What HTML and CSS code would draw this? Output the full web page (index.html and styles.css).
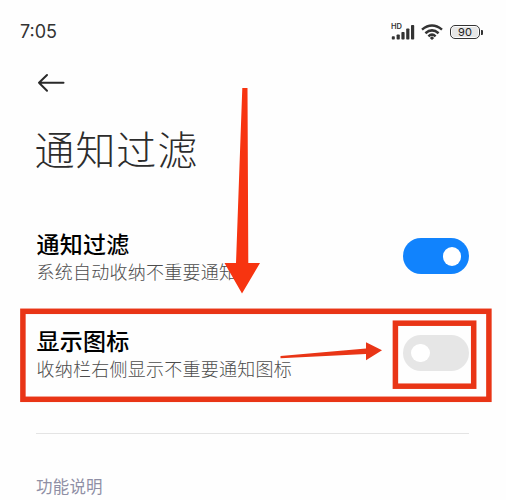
FILE: index.html
```html
<!DOCTYPE html>
<html lang="zh-CN">
<head>
<meta charset="utf-8">
<title>通知过滤</title>
<link rel="stylesheet" href="styles.css">
</head>
<body>
<div class="screen">
  <header class="status">
    <span class="time">7:05</span>
    <div class="indicators">
      <div class="signal">
        <span class="hd">HD</span>
        <svg width="24" height="16" viewBox="0 0 24 16" fill="#333"><rect x=".8" y="12.3" width="3" height="3.2" rx=".8"/><rect x="5.6" y="10.5" width="3.2" height="5" rx=".8"/><rect x="10.4" y="8" width="3.2" height="7.5" rx=".8"/><rect x="15.2" y="4.5" width="3.2" height="11" rx=".8"/><rect x="20" y="1" width="3.2" height="14.5" rx=".8"/></svg>
      </div>
      <svg class="wifi" width="22" height="16" viewBox="0 0 22 16" fill="none" stroke="#333" stroke-width="2.5"><path d="M1 5.6Q11-2.6 21 5.6M4.4 9.2Q11 3.5 17.6 9.2M7.4 12.3Q11 9 14.6 12.3"/><path d="M11 12.2l2.2 1.8-2.2 2-2.2-2z" fill="#333" stroke="none"/></svg>
      <div class="battery"><span class="level">90</span></div><i class="cap"></i>
    </div>
  </header>
  <nav class="nav">
    <svg width="28" height="20" viewBox="0 0 28 20" fill="none" stroke="#292929" stroke-width="2" stroke-linecap="round" stroke-linejoin="round"><path d="M26.5 9.7H2M10 2L2 9.7l8 8"/></svg>
  </nav>
  <h1 class="title">通知过滤</h1>
  <main>
    <section class="row">
      <div><h2 class="name">通知过滤</h2><p class="desc">系统自动收纳不重要通知</p></div>
      <div class="toggle on"><i class="knob"></i></div>
    </section>
    <section class="row">
      <div><h2 class="name">显示图标</h2><p class="desc">收纳栏右侧显示不重要通知图标</p></div>
      <div class="toggle"><i class="knob"></i></div>
    </section>
  </main>
  <footer class="note">功能说明</footer>
  <svg class="marks" width="506" height="500" viewBox="0 0 506 500">
    <g fill="none" stroke="#e93516" stroke-width="5.5"><rect x="22.9" y="311.3" width="466" height="88"/><rect x="395.4" y="323.2" width="78.3" height="63"/></g>
    <path fill="#f73410" d="M242.3 88h5.2l.8 175H260l-18 30.5L224.5 263H236z"/>
    <path fill="#e93516" d="M280.5 356l85.5-7.6V342.3L382 350.3 366 360.2V354L280.5 358.2z"/>
  </svg>
</div>
</body>
</html>
```
FILE: styles.css
```css
* { box-sizing: border-box; }
body, h1, h2, p { margin: 0; }
body { background: #fefefe; font-family: "Noto Sans CJK SC", sans-serif; }
.screen { position: relative; width: 506px; height: 500px; overflow: hidden; padding: 0 37px 0 36px; }
.status { display: flex; justify-content: space-between; height: 64px; align-items: center; margin: 0 -14px 0 -16px; }
.time { font: 18px/24px Inter, sans-serif; color: #333; }
.indicators { display: flex; align-items: center; }
.signal { position: relative; width: 24px; height: 16px; margin-right: 6px; }
.hd { position: absolute; left: 0; top: -1px; font: 600 7.5px/8px Inter, sans-serif; color: #333; }
.signal svg, .wifi { display: block; }
.wifi { margin-right: 7px; }
.battery { width: 30px; height: 14px; border: 1.5px solid #333; border-radius: 5px; padding: 1px; }
.level { display: block; height: 10px; border-radius: 2px; background: #e6e6e6; font: 400 11px/10px Inter, sans-serif; text-align: center; color: #222; }
.cap { width: 2px; height: 5px; margin-left: 1px; border-radius: 0 1px 1px 0; background: #333; }
.nav { height: 38px; padding: 9px 0 0 1px; }
.nav svg { display: block; }
.title { margin-top: 16px; height: 64px; font-size: 40px; line-height: 60px; font-weight: 300; letter-spacing: .9px; color: #2c2c2c; margin-left: -1.5px; }
main { padding-top: 25px; height: 227px; }
.row { display: flex; justify-content: space-between; align-items: center; height: 97.5px; }
.name { margin-left: .6px; font-size: 23px; line-height: 30px; font-weight: 500; letter-spacing: .2px; color: #000; }
.desc { margin-left: .4px; font-size: 18px; line-height: 26px; font-weight: 300; letter-spacing: .25px; color: #4c4c4c; }
.toggle { display: flex; align-items: center; width: 66px; height: 36px; margin: -1px 0 0; border-radius: 18px; padding: 0 8px; background: #e6e6e6; }
.toggle.on { justify-content: flex-end; background: #1183fd; margin-top: 1px; }
.knob { width: 18.5px; height: 18.5px; border-radius: 50%; background: #fff; }
.note { margin-top: 24px; border-top: 1px solid #e4e4e4; padding-top: 40px; font-size: 16.5px; line-height: 24px; letter-spacing: .2px; color: #8f8fa5; }
.marks { position: absolute; left: 0; top: 0; }
```
